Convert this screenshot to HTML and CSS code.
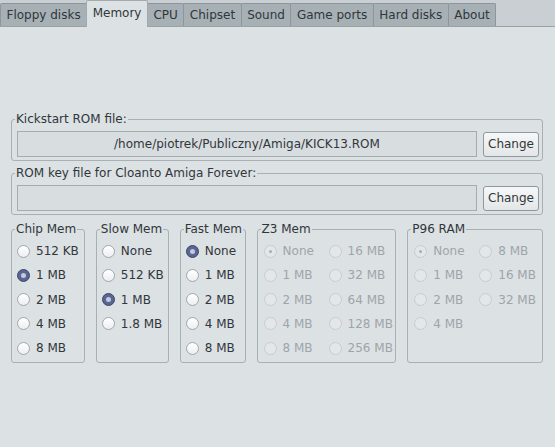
FILE: index.html
```html
<!DOCTYPE html>
<html>
<head>
<meta charset="utf-8">
<link rel="stylesheet" href="styles.css">
</head>
<body>
<div class="tabbar">
  <div class="tab">Floppy disks</div>
  <div class="tab active">Memory</div>
  <div class="tab">CPU</div>
  <div class="tab">Chipset</div>
  <div class="tab">Sound</div>
  <div class="tab">Game ports</div>
  <div class="tab">Hard disks</div>
  <div class="tab">About</div>
</div>
<div class="content">
  <fieldset class="group file-group">
    <legend>Kickstart ROM file:</legend>
    <div class="filerow">
      <div class="field">/home/piotrek/Publiczny/Amiga/KICK13.ROM</div>
      <div class="button">Change</div>
    </div>
  </fieldset>
  <fieldset class="group file-group second">
    <legend>ROM key file for Cloanto Amiga Forever:</legend>
    <div class="filerow">
      <div class="field"></div>
      <div class="button">Change</div>
    </div>
  </fieldset>
  <div class="memrow">
    <fieldset class="group mem chip">
      <legend>Chip Mem</legend>
      <div class="radio"><span class="dot"></span>512 KB</div>
      <div class="radio"><span class="dot on"></span>1 MB</div>
      <div class="radio"><span class="dot"></span>2 MB</div>
      <div class="radio"><span class="dot"></span>4 MB</div>
      <div class="radio"><span class="dot"></span>8 MB</div>
    </fieldset>
    <fieldset class="group mem slow">
      <legend>Slow Mem</legend>
      <div class="radio"><span class="dot"></span>None</div>
      <div class="radio"><span class="dot"></span>512 KB</div>
      <div class="radio"><span class="dot on"></span>1 MB</div>
      <div class="radio"><span class="dot"></span>1.8 MB</div>
    </fieldset>
    <fieldset class="group mem fast">
      <legend>Fast Mem</legend>
      <div class="radio"><span class="dot on"></span>None</div>
      <div class="radio"><span class="dot"></span>1 MB</div>
      <div class="radio"><span class="dot"></span>2 MB</div>
      <div class="radio"><span class="dot"></span>4 MB</div>
      <div class="radio"><span class="dot"></span>8 MB</div>
    </fieldset>
    <fieldset class="group mem z3">
      <legend>Z3 Mem</legend>
      <div class="grid z3grid">
        <div class="radio disabled"><span class="dot on"></span>None</div>
        <div class="radio disabled"><span class="dot"></span>16 MB</div>
        <div class="radio disabled"><span class="dot"></span>1 MB</div>
        <div class="radio disabled"><span class="dot"></span>32 MB</div>
        <div class="radio disabled"><span class="dot"></span>2 MB</div>
        <div class="radio disabled"><span class="dot"></span>64 MB</div>
        <div class="radio disabled"><span class="dot"></span>4 MB</div>
        <div class="radio disabled"><span class="dot"></span>128 MB</div>
        <div class="radio disabled"><span class="dot"></span>8 MB</div>
        <div class="radio disabled"><span class="dot"></span>256 MB</div>
      </div>
    </fieldset>
    <fieldset class="group mem p96">
      <legend>P96 RAM</legend>
      <div class="grid">
        <div class="radio disabled"><span class="dot on"></span>None</div>
        <div class="radio disabled"><span class="dot"></span>8 MB</div>
        <div class="radio disabled"><span class="dot"></span>1 MB</div>
        <div class="radio disabled"><span class="dot"></span>16 MB</div>
        <div class="radio disabled"><span class="dot"></span>2 MB</div>
        <div class="radio disabled"><span class="dot"></span>32 MB</div>
        <div class="radio disabled"><span class="dot"></span>4 MB</div>
      </div>
    </fieldset>
  </div>
</div>
</body>
</html>
```
FILE: styles.css
```css
html, body {
  margin: 0;
  padding: 0;
}
body {
  width: 555px;
  height: 447px;
  overflow: hidden;
  background: #dce1e4;
  font-family: "DejaVu Sans", sans-serif;
  font-size: 12px;
  color: #31363b;
}
.tabbar {
  display: flex;
  align-items: flex-end;
  height: 27px;
  box-sizing: border-box;
  background: #c9cfd2;
  border-bottom: 1px solid #9aa2a6;
}
.tab {
  box-sizing: border-box;
  height: 23px;
  line-height: 22px;
  padding: 0 5.5px;
  background: #a6b0b5;
  border: 1px solid #8c969b;
  border-bottom: none;
  border-radius: 2px 2px 0 0;
  margin-right: -1px;
  white-space: nowrap;
}
.tab.active {
  height: 27px;
  line-height: 24px;
  margin-bottom: -1px;
  background: #dce1e4;
  border-color: #a3aaae;
  position: relative;
}
.content {
  padding: 85px 12px 0 11px;
}
.group {
  margin: 0;
  padding: 0;
  border: 1px solid #a9b0b4;
  border-radius: 3px;
  min-width: 0;
}
.group legend {
  padding: 0 1px;
  margin-left: 3px;
  line-height: 14px;
}
.file-group.second {
  margin-top: 5px;
}
.filerow {
  display: flex;
  align-items: center;
  gap: 6px;
  padding: 5px 3px 3px 5px;
}
.field {
  flex: 1;
  height: 26px;
  box-sizing: border-box;
  border: 1px solid #a5acb0;
  background: #d8dde0;
  text-align: center;
  line-height: 24px;
  white-space: nowrap;
}
.button {
  width: 56px;
  height: 25px;
  box-sizing: border-box;
  border: 1px solid #8f989d;
  border-radius: 3px;
  background: linear-gradient(#f6f7f8, #e3e6e8);
  text-align: center;
  line-height: 23px;
}
.memrow {
  display: flex;
  gap: 11px;
  margin-top: 7px;
}
.mem {
  padding: 3px 0 2px 0;
  box-sizing: border-box;
}
.chip { width: 74px; }
.slow { width: 73px; }
.fast { width: 66px; }
.z3 { width: 140px; }
.p96 { width: 136px; }
.radio {
  display: flex;
  align-items: center;
  height: 24.25px;
  padding-left: 5px;
  white-space: nowrap;
}
.grid {
  display: grid;
  grid-template-columns: 65px 65px;
}
.grid .radio {
  padding-left: 6px;
}
.dot {
  position: relative;
  width: 13px;
  height: 13px;
  box-sizing: border-box;
  border-radius: 50%;
  border: 1px solid #a0a8ac;
  background: linear-gradient(#ffffff, #eceef0);
  margin-right: 6px;
  flex: none;
}
.dot.on {
  border-color: #3c4768;
  background: #5a6690;
}
.dot.on::after {
  content: "";
  position: absolute;
  left: 3px;
  top: 3px;
  width: 5px;
  height: 5px;
  border-radius: 50%;
  background: #c3c9de;
}
.radio.disabled {
  color: #9ea5a9;
}
.radio.disabled .dot {
  border-color: #c6ccd0;
  background: #e3e7e9;
}
.radio.disabled .dot.on::after {
  left: 4px;
  top: 4px;
  width: 3px;
  height: 3px;
  background: #a7aeb2;
}
```
